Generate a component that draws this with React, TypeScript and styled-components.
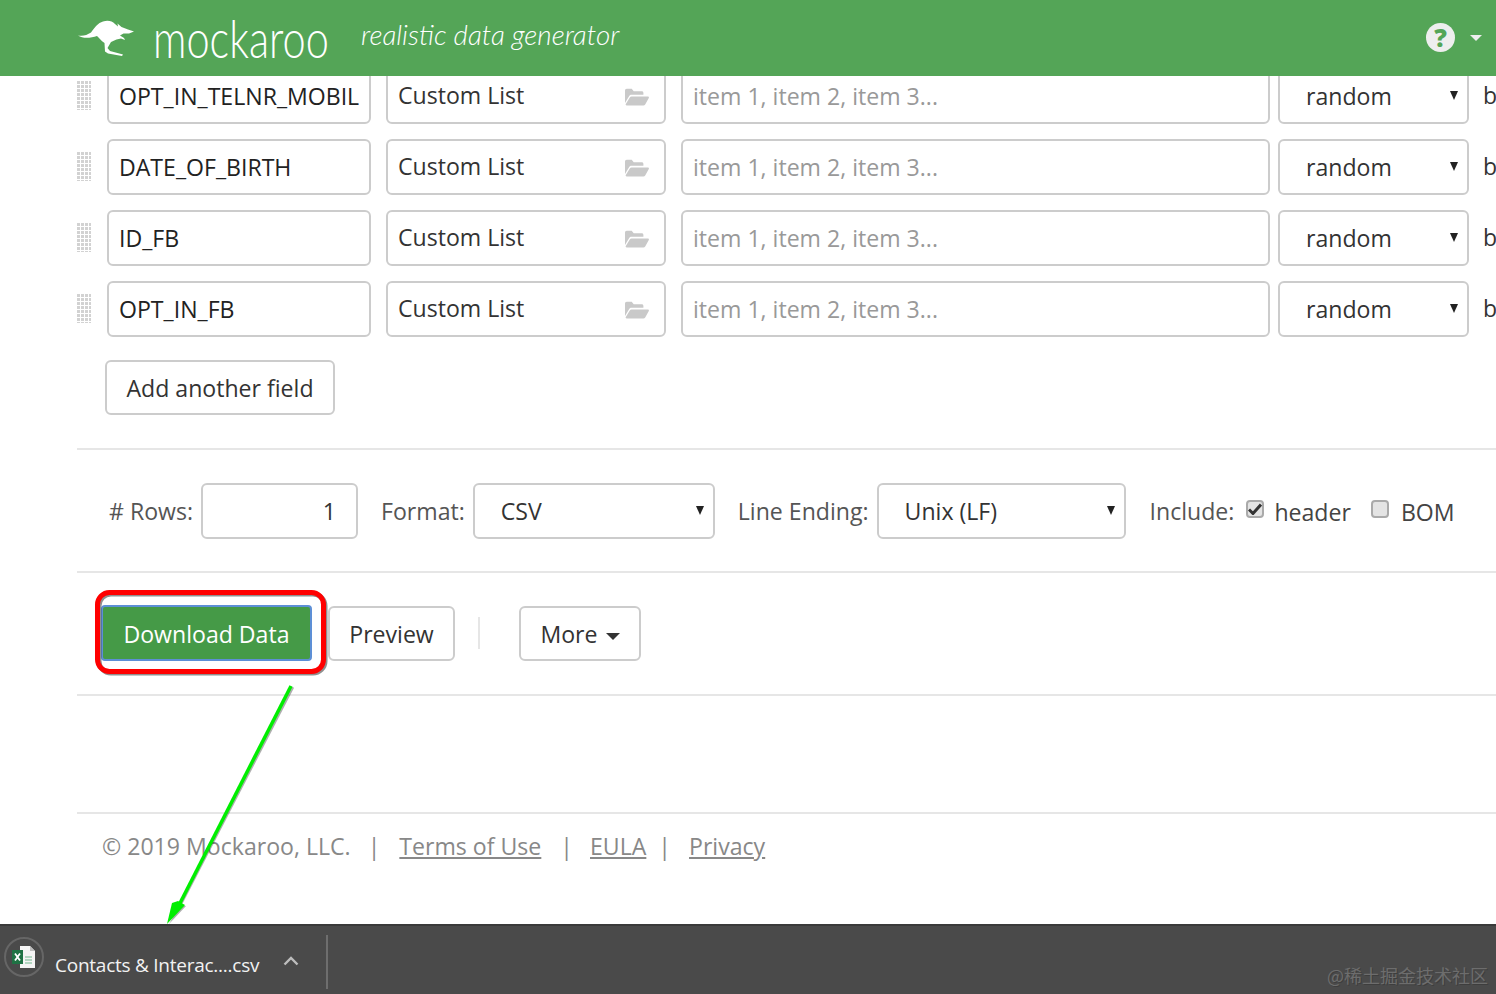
import React from "react";
import styled, { createGlobalStyle } from "styled-components";

const Global = createGlobalStyle`
  html, body { margin: 0; padding: 0; background: #fff; }
  body { font-family: "Open Sans", "Noto Sans", sans-serif; color: #333; }
  * { box-sizing: border-box; }
`;

const Page = styled.div`
  position: relative;
  width: 1496px;
  height: 994px;
  overflow: hidden;
  display: flex;
  flex-direction: column;
`;

const Header = styled.header`
  position: relative;
  z-index: 2;
  flex: none;
  height: 76px;
  background: #54a557;
  display: flex;
  align-items: center;
  padding: 0 15px 0 77px;
  color: #fff;
`;

const Brand = styled.div`
  display: flex;
  align-items: center;
`;

const Kangaroo = styled.svg`
  flex: none;
  margin-left: -1px;
`;

const Wordmark = styled.span`
  font-family: "Lato", sans-serif;
  font-weight: 300;
  font-size: 41.5px;
  line-height: 46px;
  margin-left: 17px;
  width: 175px;
  display: inline-block;
  white-space: nowrap;
  transform: scaleY(1.28);
  transform-origin: 0 50%;
`;

const Tagline = styled.span`
  font-family: "Lato", sans-serif;
  font-weight: 300;
  font-style: italic;
  font-size: 27.8px;
  line-height: 36px;
  margin: -6px 0 0 33px;
  white-space: nowrap;
`;

const HeaderRight = styled.div`
  margin: -2px 0 0 auto;
  display: flex;
  align-items: center;
  gap: 15px;
`;

const HelpCircle = styled.span`
  width: 29px;
  height: 29px;
  border-radius: 50%;
  background: #eee;
  color: #54a557;
  font-family: "Open Sans", sans-serif;
  font-weight: 800;
  font-size: 25px;
  line-height: 29px;
  text-align: center;
`;

const Caret = styled.span`
  width: 0;
  height: 0;
  border-left: 6px solid transparent;
  border-right: 6px solid transparent;
  border-top: 6px solid #eee;
  margin: 2px -1px 0 0;
`;

const Main = styled.main`
  flex: 1;
  min-height: 0;
  margin-top: -8px;
  padding-left: 77px;
  display: flex;
  flex-direction: column;
`;

const FieldRow = styled.div`
  display: flex;
  align-items: center;
  height: 56px;
  margin-bottom: 15px;
`;

const Grip = styled.span`
  flex: none;
  width: 14px;
  height: 29px;
  margin: -1px 16px 0 0;
  background-color: #d2d2d2;
  background-image:
    linear-gradient(#fff 1px, transparent 1px),
    linear-gradient(90deg, #fff 1px, transparent 1px);
  background-size: 4px 4px;
  background-position: -1px -1px;
`;

const TextBox = styled.input<{ $w: number }>`
  flex: none;
  width: ${(p) => p.$w}px;
  height: 56px;
  border: 2px solid #ccc;
  border-radius: 6px;
  padding: 0 10px;
  font: 400 23.1px "Open Sans", sans-serif;
  color: #222;
  background: #fff;
  outline: none;
  &::placeholder { color: #999; opacity: 1; }
`;

const TypeBox = styled.div`
  flex: none;
  width: 280px;
  height: 56px;
  margin: 0 15px;
  border: 2px solid #ccc;
  border-radius: 6px;
  padding: 0 15px 2px 10px;
  display: flex;
  align-items: center;
  justify-content: space-between;
  font-size: 23.1px;
  color: #333;
`;

const FolderIcon = styled.svg`
  margin-top: 4px;
`;

const SelectWrap = styled.div<{ $w: number; $ml: number }>`
  position: relative;
  flex: none;
  width: ${(p) => p.$w}px;
  height: 56px;
  margin-left: ${(p) => p.$ml}px;
  &::after {
    content: "";
    position: absolute;
    right: 11px;
    top: 23px;
    border-left: 4.5px solid transparent;
    border-right: 4.5px solid transparent;
    border-top: 9px solid #222;
  }
`;

const Select = styled.select`
  appearance: none;
  width: 100%;
  height: 100%;
  border: 2px solid #ccc;
  border-radius: 6px;
  padding: 0 24px 0 26px;
  background: #fff;
  font: 400 23.1px "Open Sans", sans-serif;
  color: #333;
  outline: none;
`;

const Clip = styled.span`
  margin-left: 14px;
  font-size: 23.1px;
  color: #333;
  margin-top: -2px;
`;

const Button = styled.button<{ $w: number }>`
  width: ${(p) => p.$w}px;
  height: 55px;
  border: 2px solid #ccc;
  border-radius: 6px;
  background: #fff;
  padding: 2px 0 0;
  font: 400 23.1px "Open Sans", sans-serif;
  color: #333;
`;

const AddButton = styled(Button)`
  flex: none;
  margin: 8px 0 0 28px;
  padding: 0;
`;

const Rule = styled.hr<{ $mt: number }>`
  width: 100%;
  flex: none;
  margin: ${(p) => p.$mt}px 0 0;
  border: 0;
  border-top: 2px solid #e6e6e6;
`;

const OptionsRow = styled.div`
  display: flex;
  align-items: center;
  height: 56px;
  margin-top: 33px;
  padding-left: 32px;
  font-size: 23.1px;
  color: #555;
`;

const Label = styled.label<{ $ml?: number }>`
  margin-left: ${(p) => p.$ml ?? 0}px;
  margin-right: 8px;
  white-space: nowrap;
`;

const RowsInput = styled(TextBox)`
  text-align: right;
  padding-right: 20px;
  color: #333;
`;

const Check = styled.span<{ $ml: number }>`
  width: 18px;
  height: 18px;
  margin-left: ${(p) => p.$ml}px;
  margin-top: -4px;
  border: 2px solid #aaa;
  border-radius: 4px;
  background: #e4e4e4;
  display: flex;
  align-items: center;
  justify-content: center;
`;

const CheckText = styled.span<{ $ml: number }>`
  margin-left: ${(p) => p.$ml}px;
  color: #444;
  margin-top: 2px;
`;

const ActionRow = styled.div`
  display: flex;
  align-items: center;
  height: 56px;
  margin-top: 32px;
  padding-left: 24px;
`;

const DownloadButton = styled.button`
  width: 211px;
  height: 56px;
  border: 2px solid #5d8fd6;
  border-radius: 4px;
  background: #459a47;
  padding: 2px 0 0;
  font: 400 23.1px "Open Sans", sans-serif;
  color: #fff;
`;

const PreviewButton = styled(Button)`
  margin-left: 16px;
`;

const VBar = styled.span`
  width: 2px;
  height: 32px;
  background: #e6e6e6;
  margin: 0 39px 0 23px;
`;

const MoreCaret = styled.span`
  display: inline-block;
  margin-left: 8px;
  vertical-align: 3px;
  border-left: 7px solid transparent;
  border-right: 7px solid transparent;
  border-top: 7px solid #333;
`;

const Footer = styled.footer`
  display: flex;
  align-items: center;
  height: 32px;
  margin-top: 16px;
  padding-left: 25px;
  font-size: 23.1px;
  color: #888;
  white-space: nowrap;
`;

const FootLink = styled.a`
  color: #888;
  text-decoration: underline;
`;

const Sep = styled.span<{ $l: number; $r: number }>`
  margin: 0 ${(p) => p.$r}px 0 ${(p) => p.$l}px;
`;

const DownloadBar = styled.div`
  position: relative;
  flex: none;
  height: 70px;
  background: #4a4a4a;
  border-top: 2px solid #3a3a3a;
  display: flex;
  align-items: center;
  padding-left: 4px;
  color: #fff;
`;

const FileIcon = styled.span`
  width: 40px;
  height: 40px;
  margin-top: -6px;
  border: 2px solid #666;
  border-radius: 50%;
  display: flex;
  align-items: center;
  justify-content: center;
`;

const FileName = styled.span`
  margin-left: 11px;
  font-family: "Open Sans", sans-serif;
  font-size: 19px;
  letter-spacing: -0.25px;
  color: #f2f2f2;
  margin-top: 10px;
  width: 206px;
  white-space: nowrap;
`;

const Chevron = styled.svg`
  margin-left: 22px;
  margin-top: 2px;
`;

const BarDivider = styled.span`
  width: 2px;
  height: 54px;
  background: #6e6e6e;
  margin-left: 27px;
  margin-top: 4px;
`;

const Watermark = styled.span`
  position: absolute;
  right: 8px;
  bottom: 6px;
  font-family: "Noto Sans CJK SC", "Noto Sans", sans-serif;
  font-size: 18px;
  color: #6d6d6d;
  text-shadow: 1px 1px 0 #3e3e3e;
  white-space: nowrap;
`;

const Annotation = styled.svg<{ $x: number; $y: number }>`
  position: absolute;
  left: ${(p) => p.$x}px;
  top: ${(p) => p.$y}px;
  z-index: 3;
  pointer-events: none;
  overflow: visible;
`;

const Folder = () => (
  <FolderIcon width="24" height="18" viewBox="0 0 24 18" aria-hidden="true">
    <path d="M0 15V2.5C0 1.5.8.8 1.7.8h5l2 2.4h8c1 0 1.7.7 1.7 1.7V6.8H6.5c-1 0-1.8.5-2.3 1.3L0 15z" fill="#c9c9c9" />
    <path d="M6.6 8.4H22.8c.9 0 1.4.9 1 1.6l-3.6 6.4c-.4.6-1 1-1.8 1H1.6c-.8 0-1.2-.8-.8-1.4l4-6.6c.4-.6 1-1 1.8-1z" fill="#c9c9c9" />
  </FolderIcon>
);

const fields = ["OPT_IN_TELNR_MOBIL", "DATE_OF_BIRTH", "ID_FB", "OPT_IN_FB"];

export default function App() {
  return (
    <Page>
      <Global />
      <Header>
        <Brand>
          <Kangaroo width="60" height="40" viewBox="0 0 58 40" aria-hidden="true">
            <path
              d="M1 17.5C6 18.5 10 17 14 14.5C18 9 21 5 26 3.5C31 2 35 3 38 6L41 8.5L40.5 5.5L44.5 9L51 11.5L57 13.5L52 15.5L46.5 15.5L43 17.5L47 20L48 22L44 20.5L39.5 21.5L34 24L30.5 30L33 33L46 36.5L45 38L31 35.5L28 33.5L27.5 25C24 22.5 22 20 20 18C14 20 6 21 1 17.5Z"
              fill="#fff"
            />
          </Kangaroo>
          <Wordmark>mockaroo</Wordmark>
          <Tagline>realistic data generator</Tagline>
        </Brand>
        <HeaderRight>
          <HelpCircle>?</HelpCircle>
          <Caret />
        </HeaderRight>
      </Header>

      <Main>
        {fields.map((f) => (
          <FieldRow key={f}>
            <Grip />
            <TextBox $w={264} defaultValue={f} />
            <TypeBox>
              Custom List
              <Folder />
            </TypeBox>
            <TextBox $w={589} placeholder="item 1, item 2, item 3..." />
            <SelectWrap $w={191} $ml={8}>
              <Select defaultValue="random">
                <option>random</option>
              </Select>
            </SelectWrap>
            <Clip>b</Clip>
          </FieldRow>
        ))}
        <AddButton $w={230}>Add another field</AddButton>
        <Rule $mt={33} />
        <OptionsRow>
          <Label>{"# Rows:"}</Label>
          <RowsInput $w={157} defaultValue="1" />
          <Label $ml={23}>Format:</Label>
          <SelectWrap $w={242} $ml={0}>
            <Select defaultValue="CSV">
              <option>CSV</option>
            </Select>
          </SelectWrap>
          <Label $ml={23}>Line Ending:</Label>
          <SelectWrap $w={249} $ml={0}>
            <Select defaultValue="Unix (LF)">
              <option>Unix (LF)</option>
            </Select>
          </SelectWrap>
          <Label $ml={24}>Include:</Label>
          <Check $ml={4}>
            <svg width="14" height="12" viewBox="0 0 14 12" aria-hidden="true">
              <path d="M1 6.5L5 10.5L13 1.5" fill="none" stroke="#333" strokeWidth="3" />
            </svg>
          </Check>
          <CheckText $ml={10}>header</CheckText>
          <Check $ml={20} />
          <CheckText $ml={12}>BOM</CheckText>
        </OptionsRow>
        <Rule $mt={32} />
        <ActionRow>
          <DownloadButton>Download Data</DownloadButton>
          <PreviewButton $w={127}>Preview</PreviewButton>
          <VBar />
          <Button $w={122}>
            More
            <MoreCaret />
          </Button>
        </ActionRow>
        <Rule $mt={33} />
        <Rule $mt={116} />
        <Footer>
          © 2019 Mockaroo, LLC.
          <Sep $l={17} $r={19}>|</Sep>
          <FootLink>Terms of Use</FootLink>
          <Sep $l={19} $r={17}>|</Sep>
          <FootLink>EULA</FootLink>
          <Sep $l={12} $r={18}>|</Sep>
          <FootLink>Privacy</FootLink>
        </Footer>
      </Main>

      <DownloadBar>
        <FileIcon>
          <svg width="26" height="24" viewBox="0 0 26 24" aria-hidden="true">
            <path d="M9 1H19L24 6V23H9Z" fill="#f4f4f4" />
            <path d="M19 1V6H24Z" fill="#bdbdbd" />
            <rect x="1" y="5" width="11" height="14" fill="#1f7244" />
            <path d="M4 8.5L9 15.5M9 8.5L4 15.5" stroke="#fff" strokeWidth="1.8" />
            <path d="M14 12H21M14 15H21M14 18H21" stroke="#9ccbb0" strokeWidth="1.4" />
          </svg>
        </FileIcon>
        <FileName>Contacts &amp; Interac....csv</FileName>
        <Chevron width="16" height="10" viewBox="0 0 16 10" aria-hidden="true">
          <path d="M1.5 8.5L8 2L14.5 8.5" fill="none" stroke="#bdbdbd" strokeWidth="2.4" />
        </Chevron>
        <BarDivider />
        <Watermark>@稀土掘金技术社区</Watermark>
      </DownloadBar>

      <Annotation $x={90} $y={585} width="245" height="345" viewBox="0 0 245 345" aria-hidden="true">
        <rect x="9" y="9" width="226" height="79" rx="12" fill="none" stroke="#333" strokeOpacity="0.55" strokeWidth="5" />
        <rect x="7.5" y="7.5" width="226" height="79" rx="12" fill="none" stroke="#f00" strokeWidth="5" />
        <path d="M202.5 102L91 318" stroke="#333" strokeOpacity="0.4" strokeWidth="3.5" />
        <path d="M90 320L79 339L96 321Z" fill="#333" fillOpacity="0.4" />
        <path d="M201 101L88 322" stroke="#00ee00" strokeWidth="3.5" />
        <path d="M82 318L77 339L95 320L88 316Z" fill="#00ee00" />
      </Annotation>
    </Page>
  );
}
